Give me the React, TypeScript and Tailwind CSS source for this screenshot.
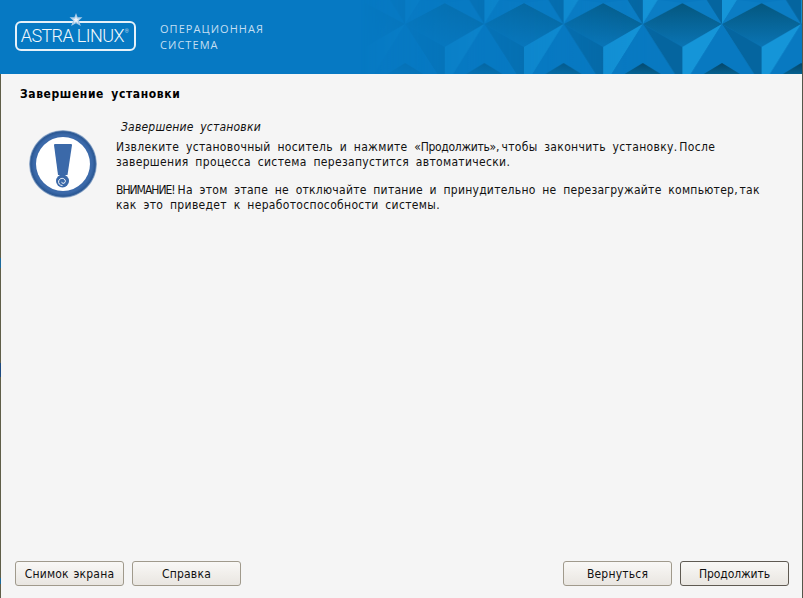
import React from 'react';

const Star = () => (
  <svg width="14" height="14" viewBox="0 0 26 26" className="absolute left-[52px] top-[-10px]">
    <polygon points="13,0 16,8 25,8 18.5,14 22,24 13,19 4,24 7.5,14 1,8 10,8" fill="#a9cbe8" />
    <polygon points="13,6 14.6,10.6 19.5,10.6 15.6,13.6 17,18.4 13,15.6 9,18.4 10.4,13.6 6.5,10.6 11.4,10.6" fill="#ffffff" opacity="0.8" />
  </svg>
);

const Pattern = () => (
  <svg width="502" height="74" viewBox="0 0 502 74" className="ml-auto block shrink-0">
    <defs>
      <linearGradient id="fade" x1="0" x2="1" y1="0" y2="0">
        <stop offset="0.12" stopColor="#fff" stopOpacity="0" />
        <stop offset="0.5" stopColor="#fff" stopOpacity="0.55" />
        <stop offset="0.72" stopColor="#fff" stopOpacity="1" />
      </linearGradient>
      <linearGradient id="top" x1="0" x2="0" y1="0" y2="1">
        <stop offset="0" stopColor="#04577f" />
        <stop offset="1" stopColor="#0a74b4" />
      </linearGradient>
      <linearGradient id="peak" x1="0" x2="0" y1="0" y2="1">
        <stop offset="0" stopColor="#04466a" />
        <stop offset="1" stopColor="#05608f" />
      </linearGradient>
      <mask id="m">
        <rect width="502" height="74" fill="url(#fade)" />
      </mask>
      <pattern id="cell" x="26" y="0" width="79.2" height="74" patternUnits="userSpaceOnUse">
        <rect width="79.2" height="74" fill="#0879c1" />
        {/* top diamond */}
        <polygon points="79.2,24 39.6,3 0,24 39.6,47" fill="url(#top)" />
        {/* small triangles above the diamond */}
        <polygon points="0,24 0,0 15,0" fill="#1595d8" />
        <polygon points="0,24 15,0 39.6,3" fill="#0b7dc4" />
        <polygon points="79.2,24 64,0 39.6,3" fill="#0b7dc4" />
        <polygon points="79.2,24 64,0 79.2,0" fill="#05659f" />
        {/* under the diamond */}
        <polygon points="0,24 39.6,47 39.6,74 32,74" fill="#05659f" />
        <polygon points="79.2,24 39.6,47 39.6,74 48,74" fill="#1595d8" />
        <polygon points="0,24 32,74 -32,74" fill="#0879c1" />
        <polygon points="79.2,24 48,74 111,74" fill="#0879c1" />
        <polygon points="0,63 18,74 -18,74" fill="url(#peak)" />
        <polygon points="79.2,63 97,74 61,74" fill="url(#peak)" />
      </pattern>
    </defs>
    <rect width="502" height="74" fill="#0679c3" />
    <rect width="502" height="74" fill="url(#cell)" mask="url(#m)" />
  </svg>
);

const WarningIcon = () => (
  <svg width="68" height="68" viewBox="0 0 68 68" className="block">
    <defs>
      <radialGradient id="ring" cx="0.5" cy="0.5" r="0.5">
        <stop offset="0.86" stopColor="#3b69a9" />
        <stop offset="0.95" stopColor="#2a5793" />
        <stop offset="1" stopColor="#b7c8de" />
      </radialGradient>
    </defs>
    <circle cx="34" cy="34" r="34" fill="url(#ring)" />
    <circle cx="34" cy="34" r="27" fill="#ffffff" />
    <path d="M26 14h16a1 1 0 0 1 1 1l-4.500 30h-9.500L25 15a1 1 0 0 1 1-1z" fill="#3b69a9" />
    <circle cx="33.500" cy="51" r="6.500" fill="#3b69a9" />
    <path d="M33.500 55.500c-2.800 0-4.400-2.300-3.800-4.600.7-2.400 3.800-3.300 5.600-1.800 1.600 1.200 1.300 3.500-.3 4.100-1.200.4-2.300-.3-2.300-1.300" fill="none" stroke="#ffffff" strokeWidth="1" />
  </svg>
);

const Btn = ({ label, dark }: { label: string; dark?: boolean }) => (
  <button
    className={`h-[25px] w-[109px] rounded-[3px] border bg-gradient-to-b from-[#f9f8f6] to-[#e9e6e1] text-center text-[12px] text-[#111] [word-spacing:1px] ${
      dark ? 'border-[#5f5a52] tracking-[-0.1px]' : 'border-[#a09a8c] tracking-[0.2px]'
    }`}
  >
    {label}
  </button>
);

const Tight = ({ children }: { children: string }) => <span className="[word-spacing:-2px]">{children}</span>;

export default function App() {
  return (
    <div className="relative flex h-[598px] w-[803px] flex-col overflow-hidden border-r border-[#55554a] bg-[#f5f5f5] font-['DejaVu_Sans_Condensed','DejaVu_Sans',sans-serif] text-[#111]">
      <header className="flex h-[74px] shrink-0 items-center bg-[#0679c3] pl-[15px]">
        <div className="relative mt-[-2px] flex h-[30px] w-[121px] shrink-0 items-center justify-center whitespace-nowrap rounded-[6px] border-2 border-[#e6f1f9] pr-[2px] font-['Roboto',sans-serif] text-[18px] font-light leading-none tracking-[-0.6px] text-[#f2f8fc]">
          <Star />
          ASTRA LINUX<span className="mb-[9px] ml-[1px] text-[5px]">®</span>
        </div>
        <div className="ml-[24px] mt-[-1px] shrink-0 font-['Open_Sans',sans-serif] text-[11px] leading-[16px] tracking-[1.05px] text-[#c4dff2]">
          <div>ОПЕРАЦИОННАЯ</div>
          <div>СИСТЕМА</div>
        </div>
        <Pattern />
      </header>

      <main className="flex flex-1 flex-col border-l border-l-[#5f5e48] pl-[19px] pr-[13px]">
        <h1 className="mt-[13px] text-[12px] font-bold leading-[15px] tracking-[0.6px] text-black [word-spacing:3px]">
          Завершение установки
        </h1>
        <div className="mt-[18px] flex">
          <div className="ml-[9px] mt-[10px] w-[87px] shrink-0">
            <WarningIcon />
          </div>
          <div className="whitespace-nowrap text-[12px] leading-[15px] text-[#111] [word-spacing:3px]">
            <p className="ml-[5px] italic tracking-[0.2px]">Завершение установки</p>
            <p className="mt-[5px] tracking-[0.33px]">
              Извлеките установочный носитель и нажмите <span className="tracking-[-0.3px]">«Продолжить»</span><Tight>, </Tight>чтобы закончить установку<Tight>. </Tight>После
              <br />
              завершения процесса система перезапустится автоматически.
            </p>
            <p className="mt-[13px] tracking-[0.26px]">
              <span className="tracking-[-1px]">ВНИМАНИЕ</span><Tight>! </Tight>На этом этапе не отключайте питание и принудительно не перезагружайте компьютер<Tight>, </Tight>так
              <br />
              <span className="tracking-[0.33px]">как это приведет к неработоспособности системы.</span>
            </p>
          </div>
        </div>
        <footer className="mt-auto mb-[12px] -ml-[5px] flex gap-[8px]">
          <Btn label="Снимок экрана" />
          <Btn label="Справка" />
          <div className="ml-auto flex gap-[8px]">
            <Btn label="Вернуться" />
            <Btn label="Продолжить" dark />
          </div>
        </footer>
      </main>

      {/* bits of the desktop showing through at the window edge */}
      <div className="absolute left-0 top-[258px] h-[10px] w-[1px] bg-[#1b6a9c]" />
      <div className="absolute left-0 top-[363px] h-[14px] w-[1px] bg-[#1d4a80]" />
      <div className="absolute left-0 top-[578px] h-[6px] w-[1px] bg-[#1b6a9c]" />
    </div>
  );
}
